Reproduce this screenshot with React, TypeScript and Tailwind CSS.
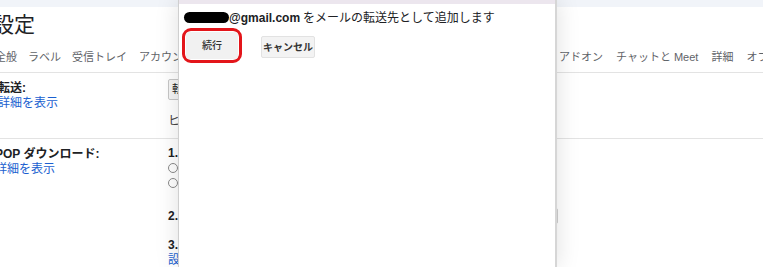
import React from 'react';

const jp = { fontFamily: '"Liberation Sans", "Noto Sans CJK JP", sans-serif' };

const leftTabs = ['全般', 'ラベル', '受信トレイ'];
const rightTabs = ['アドオン', 'チャットと Meet', '詳細', 'オフライン'];

const Radio = () => (
  <span className="block w-[10px] h-[10px] rounded-full border border-[#8a8a8a] bg-white" />
);

const SettingsPage = () => (
  <div className="w-[763px] h-[267px] bg-white text-[#202124]">
    <div className="h-[7px] bg-[#f1f4f9]" />
    <h1 className="h-[36px] flex items-center -ml-[7px] text-[21px] text-[#202124]">設定</h1>

    {/* Tabs */}
    <div className="flex items-center h-[30px] -ml-[5px] text-[11px] text-[#5f6368] border-b border-[#e3e3e3] whitespace-nowrap">
      <div className="flex shrink-0 gap-[11px]">
        {leftTabs.map((t) => (
          <span key={t}>{t}</span>
        ))}
      </div>
      <div className="ml-[12px] w-[420px] shrink-0 overflow-hidden">
        アカウントとインポート　フィルタとブロック中のアドレス
      </div>
      <div className="flex shrink-0 gap-[13px]">
        {rightTabs.map((t) => (
          <span key={t}>{t}</span>
        ))}
      </div>
    </div>

    {/* 転送 */}
    <div className="flex h-[66px] border-b border-[#e3e3e3] text-[12px] whitespace-nowrap">
      <div className="w-[170px] -ml-[2px] pt-[8px] leading-[15px]">
        <div className="font-bold">転送:</div>
        <div className="text-[#1a5fd0]">詳細を表示</div>
      </div>
      <div className="pt-[6px]">
        <div className="w-[40px] h-[21px] overflow-hidden border border-[#c6c6c6] rounded-[2px] bg-[#f5f5f5] pl-[3px] leading-[19px] text-[11px]">
          転送先アドレスを追加
        </div>
        <div className="mt-[12px] text-[#444]">ヒント: フィルタを作成すると特定のメールのみ転送できます。</div>
      </div>
    </div>

    {/* POP */}
    <div className="flex text-[12px] whitespace-nowrap">
      <div className="w-[173px] -ml-[5px] pt-[8px] leading-[15px]">
        <div className="font-bold">POP ダウンロード:</div>
        <div className="text-[#1a5fd0]">詳細を表示</div>
      </div>
      <div className="pt-[7px] leading-[15px]">
        <div className="font-bold">1. ステータス: POP 無効</div>
        <div className="flex flex-col gap-[5px] mt-[2px]">
          <Radio />
          <Radio />
        </div>
        <div className="mt-[20px] flex items-center gap-[8px]">
          <span className="font-bold">2.</span>
          <span className="w-[372px] h-[16px] border border-[#cfcfcf] rounded-[2px]" />
        </div>
        <div className="mt-[14px] font-bold">3.</div>
        <div className="text-[#1a5fd0]">設定手順</div>
      </div>
    </div>
  </div>
);

const ForwardPopup = () => (
  <div className="absolute left-[178px] top-0 w-[379px] h-[267px] bg-white border-l border-[#cfcfcf] border-r-2 border-r-[#d6d6d6] shadow-[0_0_22px_rgba(0,0,0,0.13)]">
    <div className="h-[4px] bg-[#ece6ee]" />
    <div className="pl-[5px] pt-[7px] text-[12px] text-[#202124] flex items-center h-[20px] whitespace-nowrap">
      <span className="inline-block w-[45px] h-[11px] rounded-full bg-black" />
      <span className="font-bold">@gmail.com</span>
      <span className="ml-[3px]">をメールの転送先として追加します</span>
    </div>
    <div className="flex items-start mt-[4px] pl-[3px]">
      <div className="border-[3px] border-[#e3151a] rounded-[9px] p-[1px]">
        <button className="w-[52px] h-[27px] bg-[#f1f1f1] rounded-[3px] text-[10px] text-[#333] font-medium">
          続行
        </button>
      </div>
      <button className="ml-[19px] mt-[8px] w-[54px] h-[22px] bg-[#f3f3f3] border border-[#e2e2e2] rounded-[2px] text-[10px] text-[#333] font-bold">
        キャンセル
      </button>
    </div>
  </div>
);

export default function App() {
  return (
    <div className="relative w-[763px] h-[267px] overflow-hidden bg-white" style={jp}>
      <SettingsPage />
      <ForwardPopup />
    </div>
  );
}
